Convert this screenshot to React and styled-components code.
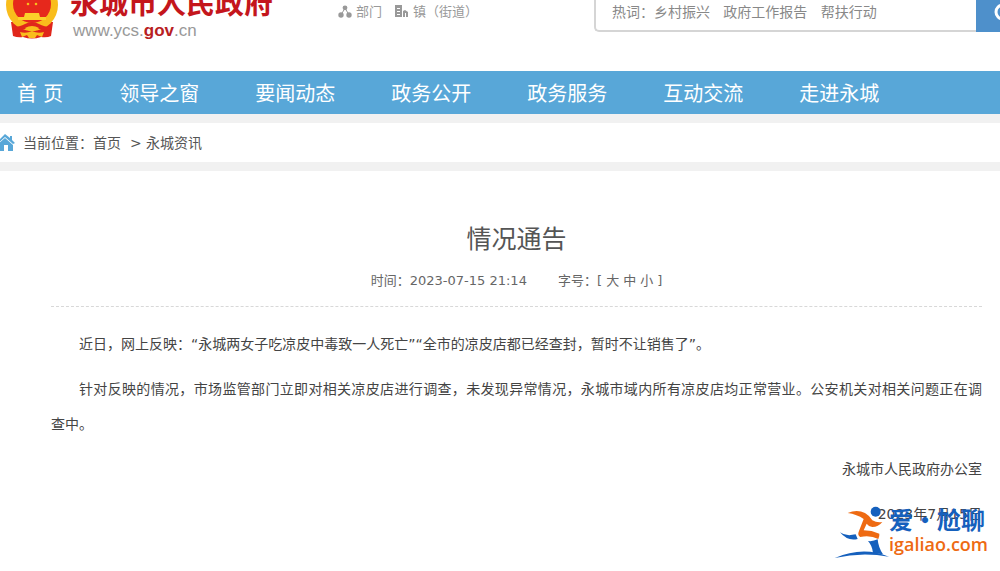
import React, { useState } from "react";
import styled, { createGlobalStyle } from "styled-components";

const GlobalStyle = createGlobalStyle`
    * {
        box-sizing: border-box;
    }

    body {
        margin: 0;
        background-color: #ffffff;
        color: #444444;
        font-family: "DejaVu Sans", "Noto Sans CJK SC", sans-serif;
        font-size: 14px;
        overflow-x: hidden;
    }

    a {
        color: inherit;
        text-decoration: none;
    }
`;

// 顶部
const Header = styled.header`
    display: flex;
    align-items: flex-start;
    height: 71px;
    overflow: hidden;
`;

const Brand = styled.a`
    display: flex;
    flex: 0 0 338px;
    gap: 12px;
    padding-left: 6px;
`;

const BrandText = styled.div`
    display: flex;
    flex-direction: column;
    margin-top: -20px;
`;

const BrandName = styled.h1`
    margin: 0;
    color: #c4161c;
    font-family: "Noto Sans CJK SC", sans-serif;
    font-size: 29px;
    font-weight: 700;
    line-height: 42px;
    white-space: nowrap;
`;

const BrandUrl = styled.span`
    padding-left: 3px;
    color: #999999;
    font-family: "Liberation Sans", sans-serif;
    font-size: 17px;
    line-height: 18px;

    b {
        color: #b8201f;
    }
`;

const QuickLinks = styled.nav`
    display: flex;
    flex: 1 1 256px;
    gap: 12px;
    color: #999999;
    font-size: 13px;
    line-height: 24px;
    white-space: nowrap;

    a {
        display: flex;
        align-items: center;
        gap: 4px;
    }
`;

const Search = styled.form`
    display: flex;
    flex: 0 0 406px;
    height: 32px;
`;

const SearchInput = styled.input`
    flex: 1;
    min-width: 0;
    margin-top: -8px;
    padding: 0 16px;
    border: 2px solid #d5d5d5;
    border-right: none;
    border-radius: 5px 0 0 5px;
    font-family: inherit;
    font-size: 14px;
    outline: none;

    &::placeholder {
        color: #888888;
        opacity: 1;
    }
`;

const SearchButton = styled.button`
    flex: 0 0 24px;
    padding: 0 0 4px 18px;
    border: none;
    background-color: #4e90cb;
    color: #ffffff;
    overflow: hidden;
    cursor: pointer;
`;

// 导航
const MainNav = styled.nav`
    display: flex;
    gap: 56px;
    padding: 3px 17px 0;
    background-color: #58a7d8;
    color: #ffffff;
    font-size: 20px;
    line-height: 40px;
    white-space: nowrap;
`;

const Breadcrumb = styled.nav`
    display: flex;
    align-items: center;
    gap: 8px;
    height: 57px;
    border: solid #f1f1f1;
    border-width: 9px 0;
    color: #555555;
`;

const Crumbs = styled.div`
    line-height: 20px;
    white-space: pre;
`;

// 正文
const Article = styled.article`
    padding: 50px 18px 0 51px;
`;

const Title = styled.h2`
    margin: 0;
    color: #555555;
    font-size: 25px;
    font-weight: 400;
    line-height: 38px;
    text-align: center;
`;

const Meta = styled.div`
    display: flex;
    justify-content: center;
    gap: 31px;
    padding: 11px 0 14px;
    border-bottom: 1px dashed #d8d8d8;
    color: #666666;
    font-size: 13px;
    line-height: 22px;
`;

const SizeButton = styled.button`
    padding: 0;
    margin-right: 4px;
    border: none;
    background: none;
    color: inherit;
    font: inherit;
    cursor: pointer;
`;

const Content = styled.div`
    padding-top: 20px;
    font-size: ${(props) => props.$size}px;
    line-height: 35px;
    text-align: justify;
`;

const Paragraph = styled.p`
    margin: 0 0 10px;
    text-indent: 2em;
`;

const Signature = styled.p`
    margin: 0 0 10px;
    text-align: right;
`;

const NoBreak = styled.span`
    white-space: nowrap;
`;

// 右下角水印
const Watermark = styled.div`
    position: absolute;
    right: 12px;
    top: 503px;
    display: flex;
    align-items: flex-start;
`;

const WatermarkText = styled.div`
    display: flex;
    flex-direction: column;
    font-family: "Noto Sans CJK SC", sans-serif;
    white-space: nowrap;
`;

const WatermarkName = styled.strong`
    color: #1560bd;
    font-size: 24px;
    line-height: 32px;
`;

const WatermarkUrl = styled.span`
    color: #ee6a12;
    font-family: "Open Sans", sans-serif;
    font-size: 18px;
    font-weight: 600;
    line-height: 18px;
`;

const NAV_ITEMS = ["首 页", "领导之窗", "要闻动态", "政务公开", "政务服务", "互动交流", "走进永城"];

const FONT_SIZES = [
    { label: "大", value: 16 },
    { label: "中", value: 14 },
    { label: "小", value: 12 },
];

function Emblem() {
    return (
        <svg width="52" height="39" viewBox="0 0 52 39" aria-hidden="true">
            <path d="M5 22 L7 36 Q12 38 17 37 Q26 40 35 37 Q41 38 45 36 L47 22 Z" fill="#e0261b" />
            <circle cx="26" cy="5" r="26" fill="#f9bd1c" />
            <circle cx="26" cy="4" r="19" fill="#e6281c" />
            <circle cx="22" cy="4" r="1.3" fill="#f9bd1c" />
            <circle cx="30" cy="4" r="1.3" fill="#f9bd1c" />
            <path d="M19 13 h14 l1 4 h6 v3 H12 v-3 h6 z" fill="#fbd02a" />
            <path d="M6 27 Q14 27 19 24 Q26 20 33 24 Q38 27 46 27 L44 31 Q36 31 31 28 Q26 26 21 28 Q16 31 8 31 Z" fill="#e0261b" />
            <path d="M19 28 Q26 24 33 28 L29 31 H23 Z" fill="#f9bd1c" />
            <path d="M14 32 Q20 34 26 31 Q32 34 38 32 L36 37 L31 35 L29 38 H23 L21 35 L16 37 Z" fill="#f9bd1c" />
        </svg>
    );
}

function DepartmentIcon() {
    return (
        <svg width="14" height="14" viewBox="0 0 14 14" fill="#999999" aria-hidden="true">
            <path d="M7 3 L3 10 M7 3 L11 10" stroke="#999999" strokeWidth="1" />
            <circle cx="7" cy="2.8" r="2.4" />
            <circle cx="3" cy="10" r="2.7" />
            <circle cx="11" cy="10" r="2.7" />
        </svg>
    );
}

function TownIcon() {
    return (
        <svg width="15" height="14" viewBox="0 0 15 14" fill="#999999" aria-hidden="true">
            <path fillRule="evenodd" d="M1 0h7v12H1z M3 3v1h3V3z M3 6v1h3V6z M3 9v1h3V9z" />
            <path d="M9 12V6l2-1 3 2v5h-2V8h-1v4z" />
        </svg>
    );
}

function HomeIcon() {
    return (
        <svg width="15" height="18" viewBox="0 0 15 18" fill="#58a7d8" aria-hidden="true">
            <path d="M-4 9 L5 0 L10 4 V2 H12 V6 L15 9 L13 10 L5 3 L-3 10 Z" />
            <path d="M-2 10 L5 4 L13 11 V17 H8 V11 H4 V17 H-1 Z" />
        </svg>
    );
}

function Runner() {
    return (
        <svg width="56" height="56" viewBox="0 0 168 168" aria-hidden="true">
            <circle cx="128" cy="26" r="15" fill="#1560bd" />
            <path d="M44 30 Q72 18 96 30 Q110 38 118 52 Q132 60 148 57 Q136 72 118 72 Q106 70 101 62 L92 82 Q116 82 139 92 Q140 100 136 108 Q112 96 82 102 Q72 96 78 84 L92 48 Q72 34 44 30Z" fill="#ee6a12" />
            <path d="M21 88 Q38 101 68 94 L74 108 Q44 116 21 88Z" fill="#1560bd" />
            <path d="M105 114 Q120 116 134 109 Q136 134 150 154 L120 150 Q118 128 105 114Z" fill="#1560bd" />
            <path d="M5 165 Q90 128 168 161 Q86 146 5 165Z" fill="#1560bd" />
        </svg>
    );
}

function App() {
    const [keyword, setKeyword] = useState("");
    const [fontSize, setFontSize] = useState(14);

    return (
        <>
            <GlobalStyle />
            <Header>
                <Brand href="#">
                    <Emblem />
                    <BrandText>
                        <BrandName>永城市人民政府</BrandName>
                        <BrandUrl>www.ycs.<b>gov</b>.cn</BrandUrl>
                    </BrandText>
                </Brand>
                <QuickLinks>
                    <a href="#"><DepartmentIcon />部门</a>
                    <a href="#"><TownIcon />镇（街道）</a>
                </QuickLinks>
                <Search onSubmit={(e) => e.preventDefault()}>
                    <SearchInput
                        type="text"
                        aria-label="搜索"
                        placeholder="热词：乡村振兴   政府工作报告   帮扶行动"
                        value={keyword}
                        onChange={(e) => setKeyword(e.target.value)}
                    />
                    <SearchButton type="submit" aria-label="搜索">
                        <svg width="20" height="20" viewBox="0 0 20 20" fill="none" stroke="currentColor" strokeWidth="3">
                            <circle cx="9" cy="9" r="7" />
                            <path d="M14 14 L19 19" />
                        </svg>
                    </SearchButton>
                </Search>
            </Header>

            <MainNav>
                {NAV_ITEMS.map((item) => (
                    <a href="#" key={item}>{item}</a>
                ))}
            </MainNav>

            <Breadcrumb>
                <HomeIcon />
                <Crumbs>
                    当前位置：<a href="#">首页</a>{"  > "}<a href="#">永城资讯</a>
                </Crumbs>
            </Breadcrumb>

            <Article>
                <Title>情况通告</Title>
                <Meta>
                    <span>时间：2023-07-15 21:14</span>
                    <span>
                        字号：[{" "}
                        {FONT_SIZES.map((size) => (
                            <SizeButton key={size.value} type="button" onClick={() => setFontSize(size.value)}>
                                {size.label}
                            </SizeButton>
                        ))}
                        ]
                    </span>
                </Meta>
                <Content $size={fontSize}>
                    <Paragraph>
                        近日，网上反映：“永城两女子吃凉皮中毒致一人死亡”“全市的凉皮店都已经查封，暂时不让销售了”。
                    </Paragraph>
                    <Paragraph>
                        针对反映的情况，市场监管部门立即对相关凉皮店进行调查，未发现异常情况，永城市域内所有凉皮店均正常营业。公安机关对相关问题正在调<NoBreak>查中。</NoBreak>
                    </Paragraph>
                    <Signature>永城市人民政府办公室</Signature>
                    <Signature>2023年7月15日</Signature>
                </Content>
            </Article>

            <Watermark>
                <Runner />
                <WatermarkText>
                    <WatermarkName>爱·尬聊</WatermarkName>
                    <WatermarkUrl>igaliao.com</WatermarkUrl>
                </WatermarkText>
            </Watermark>
        </>
    );
}

export default App;
